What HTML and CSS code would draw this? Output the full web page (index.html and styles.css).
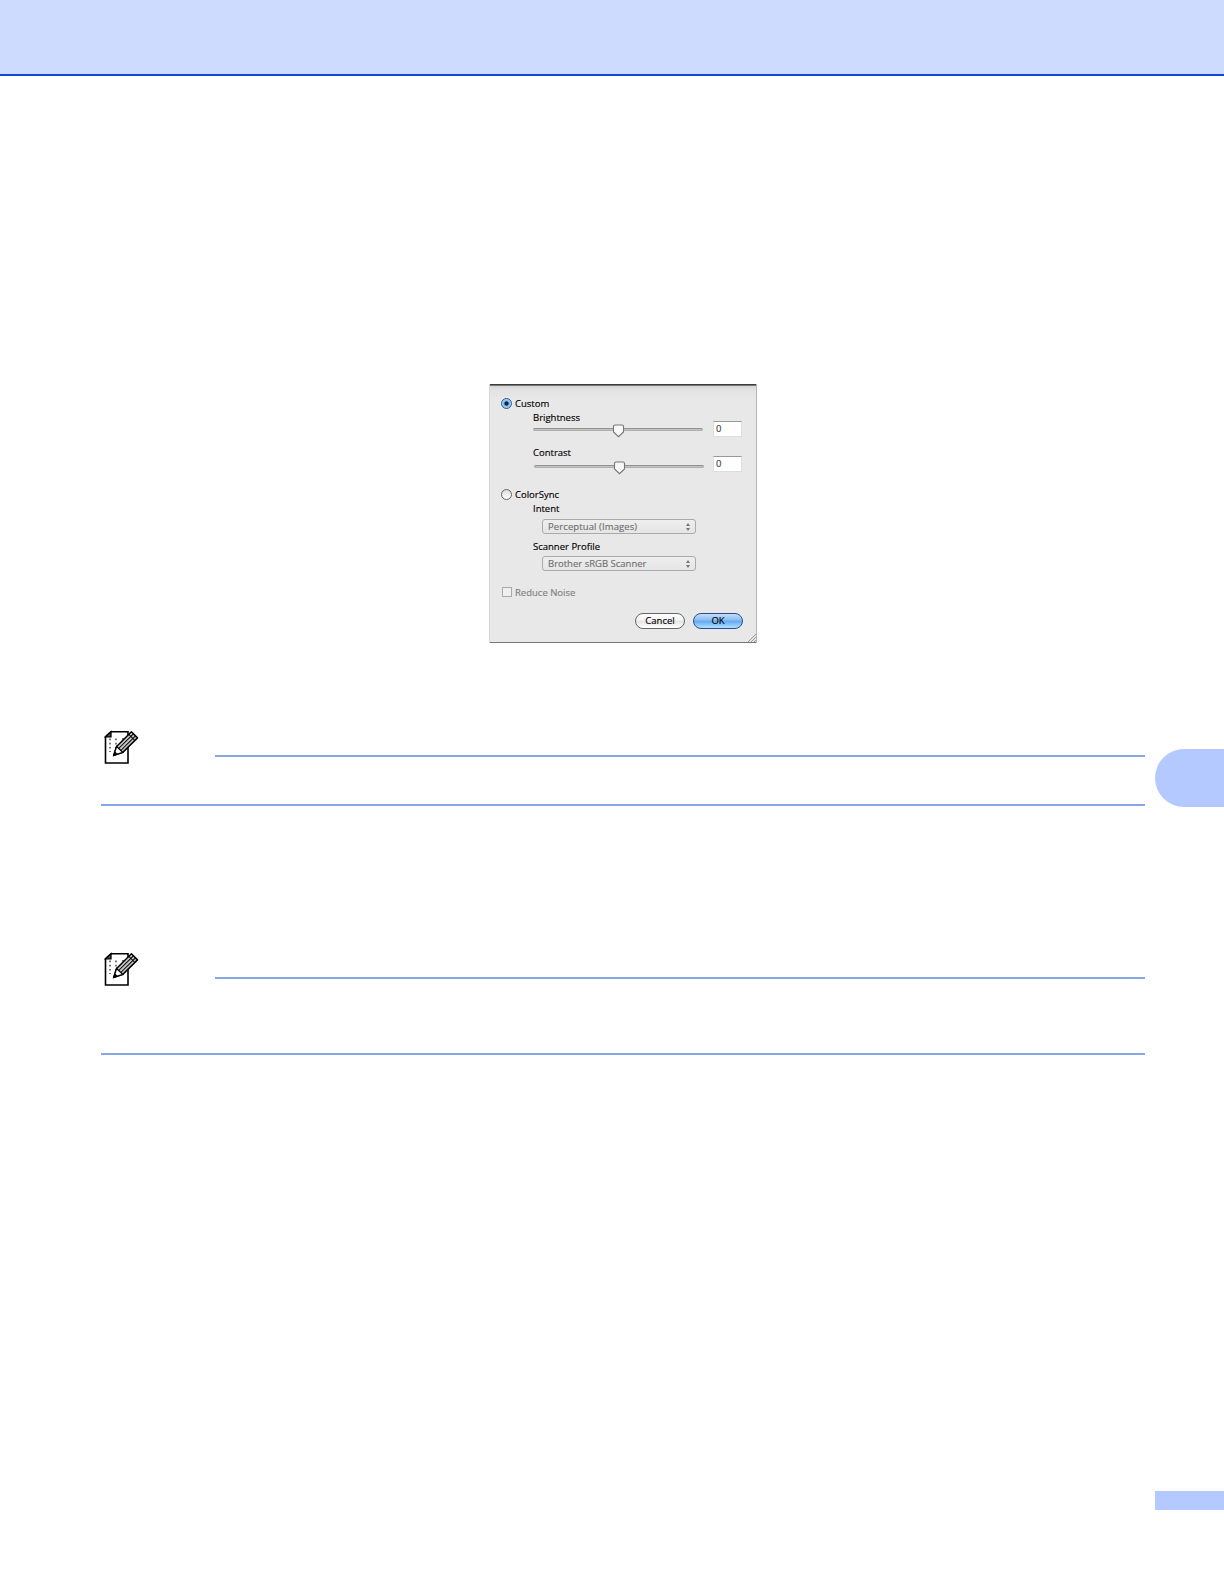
FILE: index.html
```html
<!DOCTYPE html>
<html lang="en">
<head>
<meta charset="utf-8">
<title>Scanner settings</title>
<link rel="stylesheet" href="styles.css">
</head>
<body>
<svg class="defs" width="0" height="0">
  <symbol id="note" viewBox="0 0 36 35">
    <path d="M7 1.8H24V33H1.5V6.8Z" fill="#fff" stroke="#000" stroke-width="1.6"/>
    <path d="M1.5 6.8L7 1.8V6.8Z" fill="#555" stroke="#000" stroke-width="1.3"/>
    <path d="M6 8.5V22M12 8.5V18" stroke="#555" stroke-width="1.6" stroke-dasharray="1.7 2.5"/>
    <path d="M18 9H20" stroke="#555" stroke-width="1.6"/>
    <path d="M9.7 25.4L12.6 16.5L27.4 1.8L33.5 7.9L18.8 22.4Z" fill="#c4c4c4" stroke="#000" stroke-width="1.5" stroke-linejoin="round"/>
    <path d="M9.7 25.4L12.6 16.5L18.8 22.4Z" fill="#fff" stroke="#000" stroke-width="1.3"/>
    <path d="M9.2 26L10.8 21.2L14.2 24.4Z" fill="#000"/>
    <path d="M14.6 18.5L29.4 3.8M16.8 20.5L31.5 5.9M24.8 4.4L30.9 10.5" fill="none" stroke="#000" stroke-width="1.05"/>
  </symbol>
  <symbol id="thumb" viewBox="0 0 13 14">
    <path d="M3 1H10Q11.5 1 11.5 2.5V8L6.5 12.7L1.5 8V2.5Q1.5 1 3 1Z" fill="#f8f8f8" stroke="#777" stroke-width="1.1"/>
  </symbol>
  <symbol id="arrows" viewBox="0 0 6 10">
    <path d="M1 4L3 1L5 4ZM1 6L3 9L5 6Z" fill="#757575"/>
  </symbol>
</svg>

<header class="banner"></header>
<div class="page">
  <main class="content">
    <section class="dialog">
      <div class="choice"><i class="radio selected"></i><span class="caption">Custom</span></div>
      <div class="label brightness">Brightness</div>
      <div class="slider"><div class="track"><svg class="thumb"><use href="#thumb"/></svg></div><div class="field">0</div></div>
      <div class="label contrast">Contrast</div>
      <div class="slider low"><div class="track"><svg class="thumb"><use href="#thumb"/></svg></div><div class="field">0</div></div>
      <div class="choice sync"><i class="radio"></i><span class="caption">ColorSync</span></div>
      <div class="label intent">Intent</div>
      <div class="select"><span class="wide">Perceptual (Images)</span><svg class="arrows"><use href="#arrows"/></svg></div>
      <div class="label profile">Scanner Profile</div>
      <div class="select second"><span>Brother sRGB Scanner</span><svg class="arrows"><use href="#arrows"/></svg></div>
      <div class="choice noise"><i class="check"></i><span>Reduce Noise</span></div>
      <div class="buttons"><div class="button">Cancel</div><div class="button primary">OK</div></div>
      <svg class="grip" viewBox="0 0 8 8"><path d="M0 8L8 0M3 8L8 3M6 8L8 6" stroke="#999" fill="none"/></svg>
    </section>
    <section class="note first">
      <svg class="icon"><use href="#note"/></svg><div class="rule"></div>
    </section>
    <section class="note last">
      <svg class="icon"><use href="#note"/></svg><div class="rule"></div>
    </section>
  </main>
  <aside class="side"><div class="tab"></div><div class="folio"></div></aside>
</div>
</body>
</html>
```
FILE: styles.css
```css
* { box-sizing: border-box; }
body { margin: 0; background: #fff; }
.defs { display: block; height: 0; }
.banner { height: 76px; background: #ccdbff; border-bottom: 2px solid #0a49d8; }
.page { display: flex; justify-content: space-between; height: 1508px; }
.content { width: 1145px; padding: 308px 0 0 101px; }

.dialog {
  position: relative;
  width: 268px; height: 259px; margin-left: 388px; padding: 14px 0 0 12px;
  background: linear-gradient(#3d393c 0 1px, #777 1px 2px, #d5d5d5 2px, #e2e2e2 6px, #e8e8e8 14px);
  box-shadow: inset -1px 0 #b5b5b5, inset 1px 0 #d8d8d8, inset 0 -1px #777;
  font: 500 9.5px "Open Sans", "Noto Sans", sans-serif;
  color: #000; white-space: nowrap;
  -webkit-text-stroke: 0.15px currentColor;
}
.choice { display: flex; align-items: center; gap: 3px; height: 11px; line-height: 11px; }
.radio { width: 11px; height: 11px; border: 1px solid #666; border-radius: 50%; background: linear-gradient(#ddd, #fff); }
.radio.selected { border-color: #2f548c; background: radial-gradient(circle at 50% 50%, #102745 0 1.6px, #7eb6ee 2.6px, #b5defa 5px); }
.check { width: 10px; height: 10px; margin: 0 0 0 1px; border: 1px solid #aaa; background: #efefef; }
.label { height: 8px; line-height: 8px; margin-left: 32px; }
.brightness { margin-top: 5px; }
.contrast { margin-top: 12px; }
.slider { display: flex; gap: 10px; height: 16px; margin: -1px 0 0 32px; }
.track { width: 170px; height: 3px; margin-top: 7px; border: 1px solid #999; border-color: #929292 #aaa #b0b0b0; border-radius: 2px; background: #c2c2c2; }
.low .track { margin-top: 9px; margin-left: 1px; margin-right: -1px; }
.thumb { display: block; width: 13px; height: 14px; margin: -5px 0 0 78px; }
.field { width: 29px; height: 16px; padding-left: 2px; border: 1px solid #ddd; border-top-color: #999; background: #fff; line-height: 14px; color: #444; }
.sync { margin-top: 17px; }
.intent { margin-top: 5px; }
.select {
  display: flex; justify-content: space-between; align-items: center;
  width: 154px; height: 15px; margin: 6px 0 0 41px; padding: 0 4px 0 5px;
  border: 1px solid #aaa; border-radius: 3px; background: linear-gradient(#eee, #e5e5e5);
  line-height: 13px; color: #707070;
}
.wide { letter-spacing: 0.1px; }
.arrows { width: 6px; height: 10px; }
.profile { margin-top: 9px; }
.select.second { margin-top: 5px; }
.noise { gap: 3px; height: 10px; margin-top: 16px; color: #808080; }
.buttons { display: flex; gap: 8px; margin: 16px 0 0 134px; }
.button {
  width: 50px; height: 16px; border: 1px solid #666; border-radius: 8px;
  background: linear-gradient(#fff, #f4f4f4 45%, #e4e4e4 50%, #fff);
  line-height: 13px; text-align: center;
}
.primary { border-color: #2c4a91; background: linear-gradient(#c4def8, #87bcf2 45%, #62a7ef 50%, #aee2ff); }
.grip { position: absolute; right: 1px; bottom: 1px; width: 8px; height: 8px; }
.caption { margin-top: -1px; }

.note { display: flex; justify-content: space-between; align-items: flex-start; padding-left: 3px; border-bottom: 2px solid #86a5ea; }
.icon { width: 36px; height: 35px; }
.rule { width: 930px; height: 2px; margin-top: 25px; background: #86a5e2; }
.first { height: 76px; margin-top: 87px; }
.last { height: 103px; margin-top: 146px; }
.side { display: flex; flex-direction: column; width: 69px; }
.tab { height: 58px; margin-top: 673px; border-radius: 29px 0 0 29px; background: #b3c9ff; }
.folio { height: 19px; margin-top: 684px; background: #b3c9ff; }
```
